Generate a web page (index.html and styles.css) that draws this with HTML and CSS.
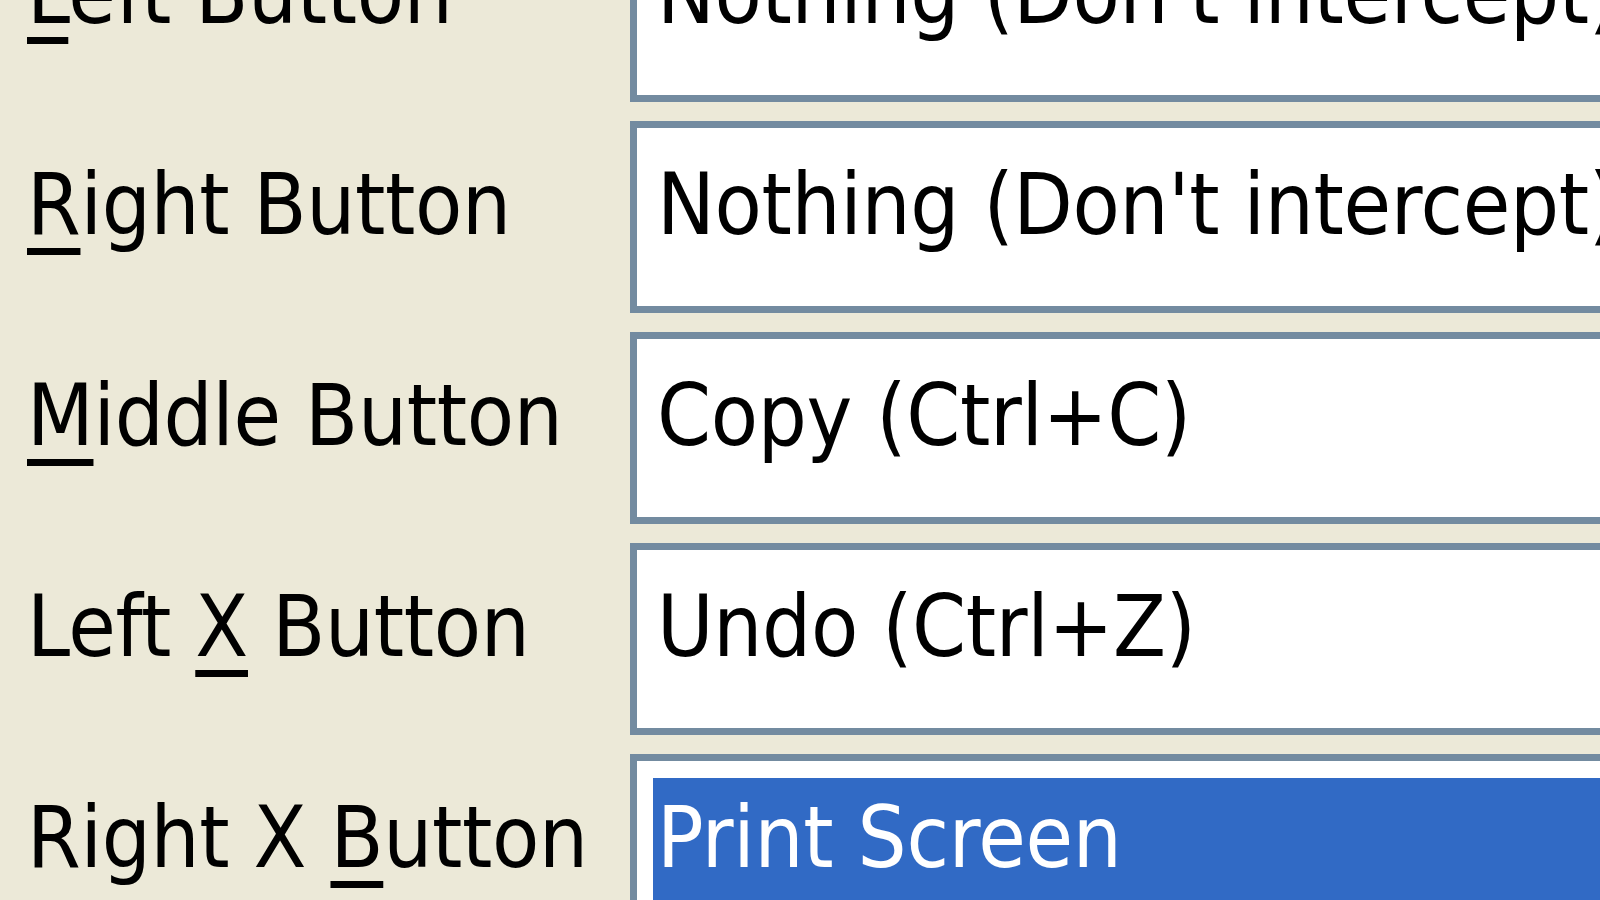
FILE: index.html
```html
<!DOCTYPE html>
<html>
<head>
<meta charset="utf-8">
<link rel="stylesheet" href="styles.css">
</head>
<body>
<div class="form">
  <div class="row">
    <div class="label"><u>L</u>eft Button</div>
    <div class="combo"><div class="option">Nothing (Don't intercept)</div></div>
  </div>
  <div class="row">
    <div class="label"><u>R</u>ight Button</div>
    <div class="combo"><div class="option">Nothing (Don't intercept)</div></div>
  </div>
  <div class="row">
    <div class="label"><u>M</u>iddle Button</div>
    <div class="combo"><div class="option">Copy (Ctrl+C)</div></div>
  </div>
  <div class="row">
    <div class="label">Left <u>X</u> Button</div>
    <div class="combo"><div class="option">Undo (Ctrl+Z)</div></div>
  </div>
  <div class="row">
    <div class="label">Right X <u>B</u>utton</div>
    <div class="combo"><div class="option selected">Print Screen</div></div>
  </div>
</div>
</body>
</html>
```

FILE: styles.css
```css
html, body {
  margin: 0;
  padding: 0;
  width: 1600px;
  height: 900px;
  overflow: hidden;
  background: #ECE9D8;
}

.form {
  margin-top: -90px;
  display: flex;
  flex-direction: column;
  gap: 19px;
  font-family: "DejaVu Sans Condensed", "DejaVu Sans", sans-serif;
  font-stretch: condensed;
  font-size: 86px;
  line-height: 100px;
  letter-spacing: -0.3px;
  color: #000;
}

.row {
  display: flex;
  align-items: baseline;
  height: 192px;
}

.label {
  width: 630px;
  flex: none;
  padding-left: 27px;
  box-sizing: border-box;
  white-space: nowrap;
}

.label u {
  text-decoration-thickness: 7px;
  text-underline-offset: 14px;
}

.combo {
  flex: none;
  width: 1100px;
  height: 192px;
  box-sizing: border-box;
  border: 7px solid #738ba0;
  background: #fff;
  padding: 17px 0 17px 16px;
  display: flex;
  flex-direction: column;
  overflow: hidden;
}

.option {
  flex: 1;
  padding: 9px 0 0 4px;
  white-space: nowrap;
}

.option.selected {
  background: #316AC5;
  color: #fff;
}
```
